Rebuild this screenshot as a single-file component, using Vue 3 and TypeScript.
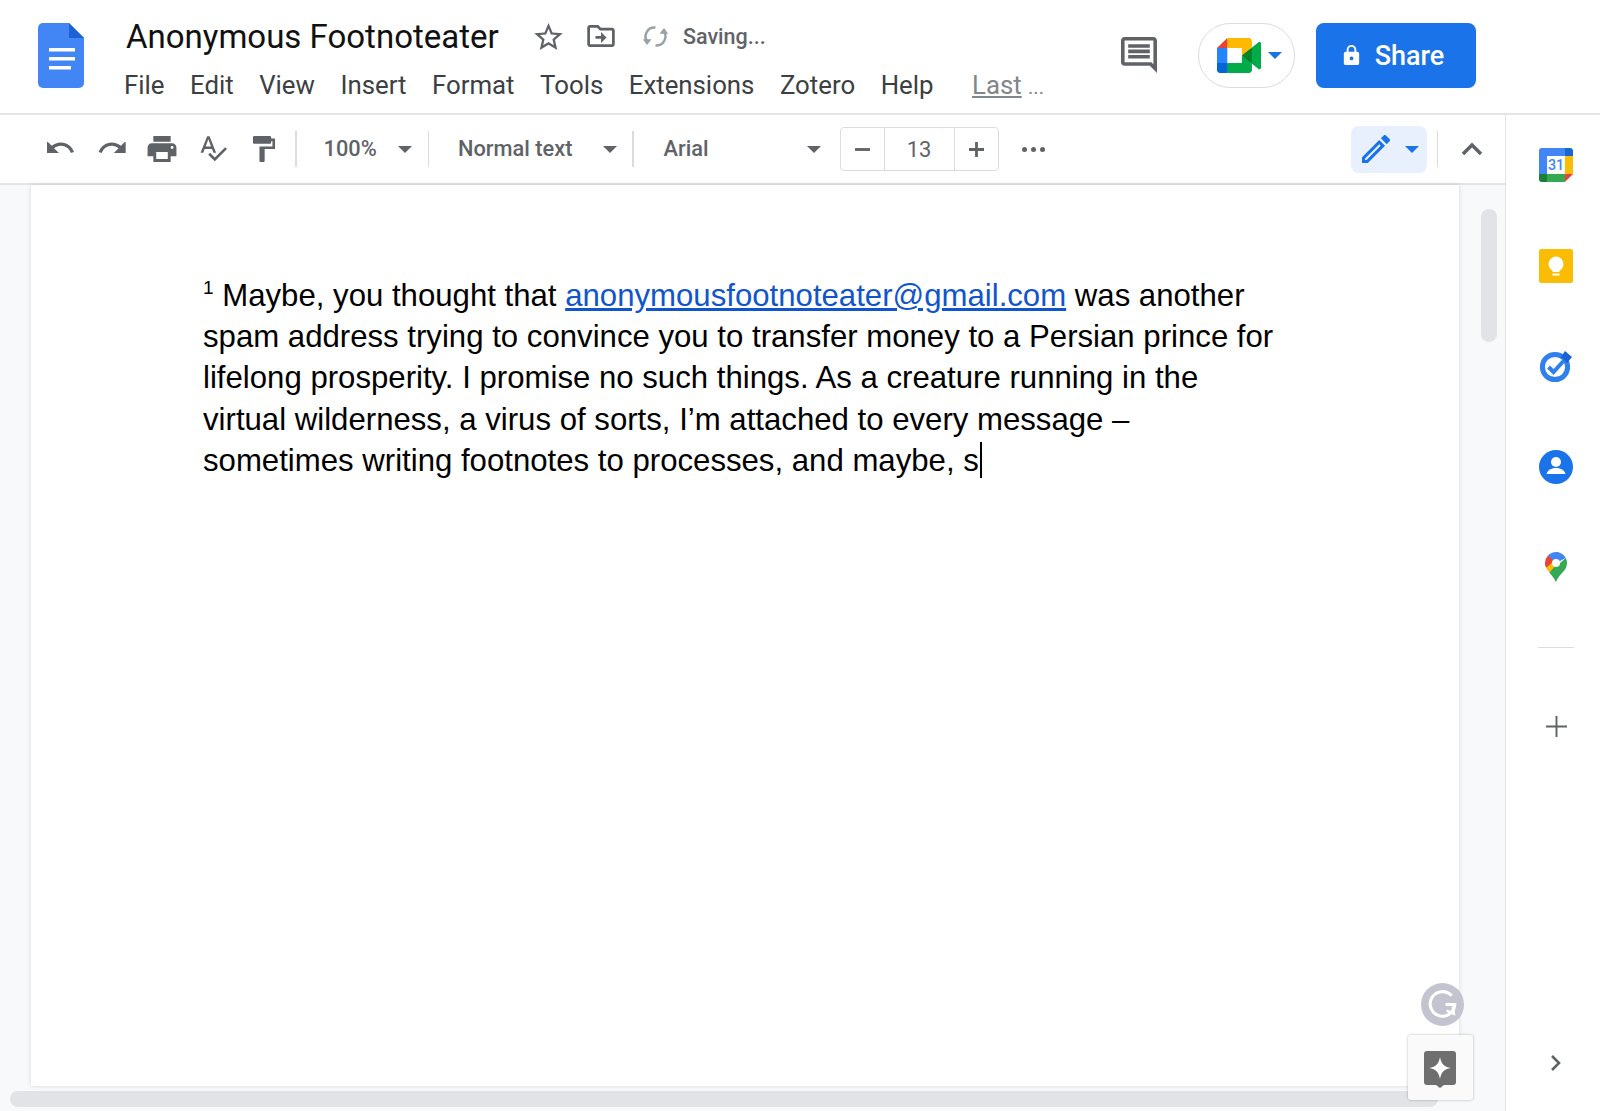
<template>
  <div class="app">
    <header class="top">
      <svg class="doc-logo" viewBox="0 0 46 65">
        <path d="M5 0h26l15 15v45a5 5 0 0 1-5 5H5a5 5 0 0 1-5-5V5a5 5 0 0 1 5-5z" fill="#4285f4" />
        <path d="M31 0l15 15H31z" fill="#1a62d6" />
        <path d="M11 25h26v3.5H11zM11 34h26v3.5H11zM11 43h22v3.5H11z" fill="#fff" />
      </svg>
      <div class="title-block">
        <div class="title-row">
          <span class="doc-title">Anonymous Footnoteater</span>
          <svg class="star" viewBox="2 2 20 19"><path :d="icons.star" /></svg>
          <svg class="folder" viewBox="2 4 20 16"><path :d="icons.folder" /></svg>
          <svg class="sync" viewBox="0 0 26 22">
            <path d="M5.5 16.5A8.6 8.6 0 0 1 13 2.4" />
            <path d="M20.5 5.5A8.6 8.6 0 0 1 13 19.6" />
            <path class="fill" d="M0.8 13.6h8.4l-4.4 5.6zM25.2 8.4h-8.4l4.4-5.6z" />
          </svg>
          <span class="saving">Saving...</span>
        </div>
        <nav class="menu">
          <span v-for="m in menus" :key="m">{{ m }}</span>
          <span class="last"><u>Last</u> <small>...</small></span>
        </nav>
      </div>
      <div class="top-right">
        <svg class="comment" viewBox="2 2 20 20"><path :d="icons.comment" /></svg>
        <div class="meet">
          <svg class="meet-logo" viewBox="0 0 87.5 72" preserveAspectRatio="none">
            <path fill="#00832d" d="M49.5 36l8.53 9.75 11.47 7.33 2-17.02-2-16.64-11.69 6.44z" />
            <path fill="#0066da" d="M0 51.5V66c0 3.315 2.685 6 6 6h14.5l3-10.96-3-9.54-9.95-3z" />
            <path fill="#e94235" d="M20.5 0L0 20.5l10.55 3 9.95-3 2.95-9.41z" />
            <path fill="#2684fc" d="M20.5 20.5H0v31h20.5z" />
            <path fill="#00ac47" d="M82.6 8.68L69.5 19.42v33.66l13.16 10.79c1.97 1.54 4.85.135 4.85-2.37V11c0-2.535-2.945-3.925-4.91-2.32zM49.5 36v15.5h-29V72h43c3.315 0 6-2.685 6-6V53.08z" />
            <path fill="#ffba00" d="M63.5 0h-43v20.5h29V36l20-16.57V6c0-3.315-2.685-6-6-6z" />
          </svg>
          <i class="arrow blue"></i>
        </div>
        <button class="share">
          <svg viewBox="0 0 24 24"><path :d="icons.lock" /></svg>
          Share
        </button>
      </div>
    </header>

    <div class="body">
      <div class="left">
        <div class="toolbar">
          <svg class="tb undo" viewBox="2 8 22 10"><path :d="icons.undo" /></svg>
          <svg class="tb redo" viewBox="1 8 22 10"><path :d="icons.redo" /></svg>
          <svg class="tb print" viewBox="2 3 20 18"><path :d="icons.print" /></svg>
          <svg class="tb spell" viewBox="2 3 21 20"><path :d="icons.spell" /></svg>
          <svg class="tb paint" viewBox="4 2 17 20"><path :d="icons.paint" /></svg>
          <i class="sep first"></i>
          <span class="tb-text zoom">100%</span>
          <i class="arrow"></i>
          <i class="sep second"></i>
          <span class="tb-text style">Normal text</span>
          <i class="arrow"></i>
          <i class="sep third"></i>
          <span class="tb-text font">Arial</span>
          <i class="arrow"></i>
          <div class="size-box">
            <span class="size-btn">
              <svg viewBox="0 0 16 16"><path d="M0 6.5h16v3H0z" /></svg>
            </span>
            <span class="size-val">13</span>
            <span class="size-btn">
              <svg viewBox="0 0 16 16"><path d="M0 6.5h6.5V0h3v6.5H16v3H9.5V16h-3V9.5H0z" /></svg>
            </span>
          </div>
          <span class="dots"><i></i><i></i><i></i></span>
          <div class="pencil">
            <svg viewBox="3 3 18 18"><path :d="icons.pencil" /></svg>
            <i class="arrow blue"></i>
          </div>
          <i class="sep fourth"></i>
          <svg class="collapse" viewBox="0 0 22 14"><path d="M2 12l9-9 9 9" /></svg>
        </div>

        <div class="canvas">
          <div class="page">
            <p class="note">
              <sup>1</sup> Maybe, you thought that
              <a>anonymousfootnoteater@gmail.com</a> was another<br />
              spam address trying to convince you to transfer money to a Persian prince for<br />
              lifelong prosperity. I promise no such things. As a creature running in the<br />
              virtual wilderness, a virus of sorts, I’m attached to every message –<br />
              sometimes writing footnotes to processes, and maybe, s<span class="caret"></span>
            </p>
          </div>
          <div class="vbar"></div>
          <div class="hbar"></div>
          <div class="grammarly">
            <svg viewBox="0 0 42 42">
              <path d="M30 12.5A12 12 0 1 0 33 21h-9" />
              <path d="M25 27l7 3-1-7" class="thin" />
            </svg>
          </div>
          <div class="explore">
            <svg viewBox="0 0 32 37">
              <path d="M3 0h26a3 3 0 0 1 3 3v28a3 3 0 0 1-3 3h-9l-4 3-4-3H3a3 3 0 0 1-3-3V3a3 3 0 0 1 3-3z" fill="#6f6f6f" />
              <path d="M16 6c1.2 6.5 3.6 9.8 11 11-7.4 1.2-9.8 4.5-11 11-1.2-6.5-3.6-9.8-11-11 7.4-1.2 9.8-4.5 11-11z" fill="#fff" />
            </svg>
          </div>
        </div>
      </div>

      <aside class="side">
        <div class="slot">
          <svg class="s34" viewBox="0 0 200 200">
            <path fill="#fff" d="M152.6 47.4H47.4v105.2h105.2z" />
            <path fill="#ea4335" d="M152.6 200l47.4-47.4-23.7-4-23.7 4-4.3 21.7z" />
            <path fill="#188038" d="M0 152.6v31.6C0 192.9 7.1 200 15.8 200h31.6l4.9-23.7-4.9-23.7-25.8-4z" />
            <path fill="#1967d2" d="M200 47.4V15.8C200 7.1 192.9 0 184.2 0h-31.6c-2.9 11.7-4.3 20.4-4.3 26.1 0 5.7 1.4 12.8 4.3 21.3 10.5 3 18.4 4.5 23.7 4.5 5.3 0 13.2-1.5 23.7-4.5z" />
            <path fill="#fbbc04" d="M200 47.4h-47.4v105.2H200z" />
            <path fill="#34a853" d="M152.6 152.6H47.4V200h105.2z" />
            <path fill="#4285f4" d="M152.6 0H15.8C7.1 0 0 7.1 0 15.8v136.8h47.4V47.4h105.2z" />
            <text x="100" y="130" text-anchor="middle" class="cal-num">31</text>
          </svg>
        </div>
        <div class="slot">
          <svg class="s34" viewBox="0 0 34 34">
            <rect width="34" height="34" rx="2.5" fill="#fbbc04" />
            <circle cx="17" cy="15" r="7.5" fill="#fff" />
            <rect x="13.5" y="20" width="7" height="3" fill="#fff" />
            <rect x="13.5" y="24.5" width="7" height="2" fill="#fff" />
          </svg>
        </div>
        <div class="slot">
          <svg class="s34" viewBox="0 0 34 34">
            <circle cx="16" cy="18" r="12.6" fill="none" stroke="#2f80ed" stroke-width="5" />
            <path d="M9.5 18l5 5 10-11" fill="none" stroke="#2f80ed" stroke-width="4" />
            <path d="M26 2l7 6-5 6-6-6z" fill="#1a62d6" />
          </svg>
        </div>
        <div class="slot">
          <svg class="s34" viewBox="0 0 34 34">
            <circle cx="17" cy="17" r="17" fill="#1a73e8" />
            <circle cx="17" cy="12" r="5" fill="#fff" />
            <path d="M7.5 24c1-4.5 6-6 9.5-6s8.500 1.500 9.500 6z" fill="#fff" />
          </svg>
        </div>
        <div class="slot">
          <svg class="maps" viewBox="0 0 22 30">
            <path d="M11 30c-1.500-4-4-6.500-6.500-9.500L11 11z" fill="#34a853" />
            <path d="M11 30c1.500-4 3.500-6.500 6-9 2.500-2.500 5-5.500 5-10 0-2-.5-3.500-1.300-5L4.500 20.500C7 23.500 9.500 26 11 30z" fill="#34a853" />
            <path d="M3 3.500A11 11 0 0 0 0 11c0 2 .5 3.500 1.200 5L11 8z" fill="#ea4335" />
            <path d="M3 3.500A11 11 0 0 1 11 0c4.300 0 7.800 2.400 9.700 6L11 11z" fill="#4285f4" />
            <path d="M1.200 16c.8 1.700 2 3 3.300 4.500L14 9.500 11 7z" fill="#fbbc04" />
            <circle cx="11" cy="11" r="4" fill="#fff" />
          </svg>
        </div>
        <i class="side-rule"></i>
        <svg class="side-plus" viewBox="0 0 22 22"><path d="M10 0h2v10h10v2H12v10h-2V12H0v-2h10z" /></svg>
        <svg class="side-more" viewBox="0 0 12 18"><path d="M2 2l7 7-7 7" /></svg>
      </aside>
    </div>
  </div>
</template>

<script setup lang="ts">
const menus: string[] = [
  "File",
  "Edit",
  "View",
  "Insert",
  "Format",
  "Tools",
  "Extensions",
  "Zotero",
  "Help",
];

const icons = {
  star: "M22 9.24l-7.19-.62L12 2 9.19 8.63 2 9.24l5.46 4.73L5.82 21 12 17.27 18.18 21l-1.63-7.03L22 9.24zM12 15.4l-3.76 2.27 1-4.28-3.32-2.88 4.38-.38L12 6.1l1.71 4.04 4.38.38-3.32 2.88 1 4.28L12 15.4z",
  folder:
    "M20 6h-8l-2-2H4c-1.1 0-2 .9-2 2v12c0 1.1.9 2 2 2h16c1.1 0 2-.9 2-2V8c0-1.1-.9-2-2-2zm0 12H4V6h5.17l2 2H20v10zm-8-4H8v-2h4V9l4 4-4 4v-3z",
  comment:
    "M21.99 4c0-1.1-.89-2-1.99-2H4c-1.1 0-2 .9-2 2v12c0 1.1.9 2 2 2h14l4 4-.01-18zM20 4v13.17L18.83 16H4V4h16zM6 12h12v2H6zm0-3h12v2H6zm0-3h12v2H6z",
  lock: "M18 8h-1V6c0-2.76-2.24-5-5-5S7 3.24 7 6v2H6c-1.100 0-2 .9-2 2v10c0 1.100.9 2 2 2h12c1.100 0 2-.9 2-2V10c0-1.100-.9-2-2-2zm-6 9c-1.100 0-2-.9-2-2s.9-2 2-2 2 .9 2 2-.9 2-2 2zm3.100-9H8.900V6c0-1.710 1.390-3.100 3.100-3.100 1.710 0 3.100 1.390 3.100 3.100v2z",
  undo: "M12.5 8c-2.650 0-5.050.99-6.900 2.600L2 7v9h9l-3.620-3.620c1.390-1.160 3.160-1.880 5.120-1.880 3.540 0 6.550 2.310 7.600 5.500l2.370-.78C21.080 11.030 17.150 8 12.500 8z",
  redo: "M18.400 10.600C16.550 8.990 14.150 8 11.500 8c-4.650 0-8.580 3.030-9.960 7.220L3.900 16c1.050-3.190 4.050-5.500 7.600-5.500 1.950 0 3.730.72 5.120 1.880L13 16h9V7l-3.600 3.600z",
  print:
    "M19 8H5c-1.660 0-3 1.340-3 3v6h4v4h12v-4h4v-6c0-1.660-1.340-3-3-3zm-3 11H8v-5h8v5zm3-7c-.55 0-1-.45-1-1s.45-1 1-1 1 .45 1 1-.45 1-1 1zm-1-9H6v4h12V3z",
  spell:
    "M12.450 16h2.090L9.430 3H7.570L2.460 16h2.090l1.120-3h5.640l1.140 3zm-6.020-5L8.500 5.480 10.570 11H6.430zm15.160.59l-8.090 8.090L9.830 16l-1.410 1.410 5.090 5.090L23 13l-1.410-1.410z",
  paint:
    "M18 4V3c0-.55-.45-1-1-1H5c-.55 0-1 .45-1 1v4c0 .55.45 1 1 1h12c.55 0 1-.45 1-1V6h1v4H9v11c0 .55.45 1 1 1h2c.55 0 1-.45 1-1v-9h8V4h-3z",
  pencil:
    "M14.060 9.020l.92.92L5.920 19H5v-.92l9.060-9.060M17.660 3c-.25 0-.51.1-.7.29l-1.830 1.830 3.750 3.750 1.830-1.830c.39-.39.39-1.020 0-1.410l-2.340-2.340c-.2-.2-.45-.29-.71-.29zm-3.600 3.190L3 17.250V21h3.750L17.810 9.940l-3.750-3.750z",
};
</script>

<style>
html,
body {
  margin: 0;
  background: #fff;
}
</style>

<style scoped>
.app {
  width: 1600px;
  height: 1111px;
  overflow: hidden;
  display: flex;
  flex-direction: column;
  font-family: Roboto, "Liberation Sans", sans-serif;
  color: #3c4043;
}
.top {
  flex: 0 0 115px;
  box-sizing: border-box;
  border-bottom: 2px solid #e3e4e6;
  display: flex;
  align-items: flex-start;
  padding: 23px 124px 0 38px;
}
.doc-logo {
  width: 46px;
  height: 65px;
  flex: none;
}
.title-block {
  margin-left: 42px;
  margin-top: -9px;
}
.title-row {
  display: flex;
  align-items: center;
  height: 44px;
}
.doc-title {
  font-size: 33px;
  color: #111;
  width: 408px;
  white-space: nowrap;
}
.title-row svg path {
  fill: #5f6368;
}
.star {
  width: 29px;
  height: 27px;
}
.folder {
  width: 28px;
  height: 22px;
  margin-left: 24px;
}
.sync {
  width: 27px;
  height: 23px;
  margin-left: 27px;
}
.title-row .sync path {
  fill: none;
  stroke: #9aa0a6;
  stroke-width: 2.4;
}
.title-row .sync path.fill {
  fill: #9aa0a6;
  stroke: none;
}
.saving {
  margin-left: 14px;
  font-size: 21.5px;
  font-weight: 500;
  color: #5f6368;
}
.menu {
  display: flex;
  gap: 25.5px;
  margin: 10px 0 0 -2px;
  font-size: 25.8px;
  line-height: 34px;
  color: #3c4043;
}
.menu .last {
  margin-left: 13px;
  color: #80868b;
}
.menu .last small {
  font-size: 20px;
}
.top-right {
  margin-left: auto;
  display: flex;
  align-items: flex-start;
}
.comment {
  width: 36px;
  height: 36px;
  margin-top: 14px;
  fill: #5f6368;
}
.meet {
  width: 97px;
  height: 65px;
  margin-left: 41px;
  box-sizing: border-box;
  border: 1.5px solid #dadce0;
  border-radius: 32px;
  display: flex;
  align-items: center;
  padding-left: 18px;
  gap: 7px;
}
.meet-logo {
  width: 44px;
  height: 35px;
}
.share {
  width: 160px;
  height: 65px;
  margin-left: 21px;
  border: 0;
  border-radius: 8px;
  background: #1a73e8;
  color: #fff;
  font-family: inherit;
  font-size: 27px;
  font-weight: 500;
  display: flex;
  align-items: center;
  justify-content: center;
  gap: 12px;
  padding: 0 8px 0 0;
}
.share svg {
  width: 23px;
  height: 23px;
  fill: #fff;
}
.arrow {
  display: block;
  flex: none;
  width: 0;
  height: 0;
  border-left: 7px solid transparent;
  border-right: 7px solid transparent;
  border-top: 7px solid #5f6368;
}
.arrow.blue {
  border-top-color: #1a73e8;
}
.body {
  flex: 1;
  display: flex;
  min-height: 0;
}
.left {
  width: 1505px;
  display: flex;
  flex-direction: column;
}
.toolbar {
  flex: 0 0 70px;
  box-sizing: border-box;
  border-bottom: 2px solid #e3e4e6;
  display: flex;
  align-items: center;
  padding-left: 47px;
}
.tb {
  fill: #5f6368;
  flex: none;
}
.undo,
.redo {
  width: 29px;
  height: 14px;
}
.redo {
  margin-left: 22px;
}
.print {
  width: 30px;
  height: 26px;
  margin-left: 20px;
}
.spell {
  width: 27px;
  height: 26px;
  margin-left: 23px;
}
.paint {
  width: 24px;
  height: 26px;
  margin-left: 25px;
}
.sep {
  display: block;
  flex: none;
  width: 1.5px;
  height: 36px;
  background: #dadce0;
}
.sep.first {
  margin-left: 19px;
}
.sep.second {
  margin-left: 16px;
}
.sep.third {
  margin-left: 15px;
}
.sep.fourth {
  margin-left: 10px;
}
.tb-text {
  font-size: 21.8px;
  font-weight: 500;
  color: #5f6368;
  flex: none;
  margin-top: -2px;
}
.zoom {
  margin-left: 27px;
  width: 74px;
}
.style {
  margin-left: 29px;
  width: 145px;
}
.font {
  margin-left: 30px;
  width: 143px;
}
.size-box {
  flex: none;
  margin-left: 19px;
  width: 159px;
  height: 44px;
  box-sizing: border-box;
  border: 1.5px solid #dadce0;
  border-radius: 4px;
  display: flex;
  align-items: stretch;
}
.size-btn {
  flex: 0 0 43px;
  display: flex;
  align-items: center;
  justify-content: center;
}
.size-btn svg {
  width: 15px;
  height: 15px;
  fill: #5f6368;
}
.size-val {
  flex: 1;
  border-left: 1.5px solid #dadce0;
  border-right: 1.5px solid #dadce0;
  text-align: center;
  line-height: 43px;
  font-size: 22px;
  color: #5f6368;
}
.dots {
  flex: none;
  margin-left: 23px;
  display: flex;
  gap: 4px;
}
.dots i {
  width: 5px;
  height: 5px;
  border-radius: 50%;
  background: #5f6368;
}
.pencil {
  flex: none;
  margin-left: 306px;
  width: 76px;
  height: 47px;
  border-radius: 8px;
  background: #e8f0fe;
  display: flex;
  align-items: center;
  padding-left: 11px;
  box-sizing: border-box;
  gap: 15px;
}
.pencil svg {
  width: 28px;
  height: 28px;
  fill: #1a73e8;
}
.collapse {
  flex: none;
  width: 22px;
  height: 14px;
  margin-left: 23px;
  fill: none;
  stroke: #5f6368;
  stroke-width: 3.5;
}
.canvas {
  flex: 1;
  position: relative;
  background: #f8f9fa;
  padding: 0 46px 25px 31px;
  min-height: 0;
}
.page {
  height: 100%;
  box-sizing: border-box;
  background: #fff;
  box-shadow: 0 0 4px rgba(60, 64, 67, 0.18);
  padding: 90.3px 0 0 172px;
}
.note {
  margin: 0;
  font-family: "Liberation Sans", Arial, sans-serif;
  font-size: 31.17px;
  line-height: 41.1px;
  color: #000;
  white-space: nowrap;
}
.note sup {
  font-size: 19px;
  line-height: 0;
  vertical-align: 12px;
}
.note a {
  color: #1155cc;
  text-decoration: underline;
}
.caret {
  display: inline-block;
  width: 2px;
  height: 36px;
  margin-left: 1px;
  background: #000;
  vertical-align: -7px;
}
.vbar {
  position: absolute;
  left: 1481px;
  top: 24px;
  width: 16px;
  height: 133px;
  border-radius: 8px;
  background: #e1e3e6;
}
.hbar {
  position: absolute;
  left: 10px;
  bottom: 4px;
  width: 1428px;
  height: 16px;
  border-radius: 8px;
  background: #e1e3e6;
}
.grammarly {
  position: absolute;
  left: 1421px;
  top: 798px;
  width: 43px;
  height: 43px;
  border-radius: 50%;
  background: #c3c4d0;
}
.grammarly svg {
  display: block;
  width: 43px;
  height: 43px;
  fill: none;
  stroke: #fff;
  stroke-width: 3;
}
.grammarly .thin {
  stroke-width: 2.5;
}
.explore {
  position: absolute;
  left: 1408px;
  top: 850px;
  width: 65px;
  height: 65px;
  box-sizing: border-box;
  border-radius: 3px;
  background: #fafafa;
  box-shadow: 0 0 3px rgba(0, 0, 0, 0.28);
  display: flex;
  align-items: center;
  justify-content: center;
}
.explore svg {
  width: 32px;
  height: 37px;
  margin-top: 3px;
  margin-left: -2px;
}
.side {
  flex: 1;
  box-sizing: border-box;
  border-left: 1.5px solid #e3e4e6;
  display: flex;
  flex-direction: column;
  align-items: center;
  padding: 0 0 39px 6px;
  background: #fff;
}
.slot {
  flex: 0 0 100.5px;
  display: flex;
  align-items: center;
  justify-content: center;
}
.s34 {
  width: 34px;
  height: 34px;
}
.cal-num {
  font-family: Roboto, sans-serif;
  font-size: 84px;
  font-weight: 500;
  fill: #4285f4;
}
.maps {
  width: 22px;
  height: 30px;
}
.side-rule {
  display: block;
  width: 36px;
  height: 1.5px;
  background: #dadce0;
  margin-top: 29px;
}
.side-plus {
  width: 21px;
  height: 21px;
  margin-top: 68px;
  fill: #5f6368;
}
.side-more {
  width: 12px;
  height: 18px;
  margin-top: auto;
  fill: none;
  stroke: #5f6368;
  stroke-width: 2.6;
}
</style>
